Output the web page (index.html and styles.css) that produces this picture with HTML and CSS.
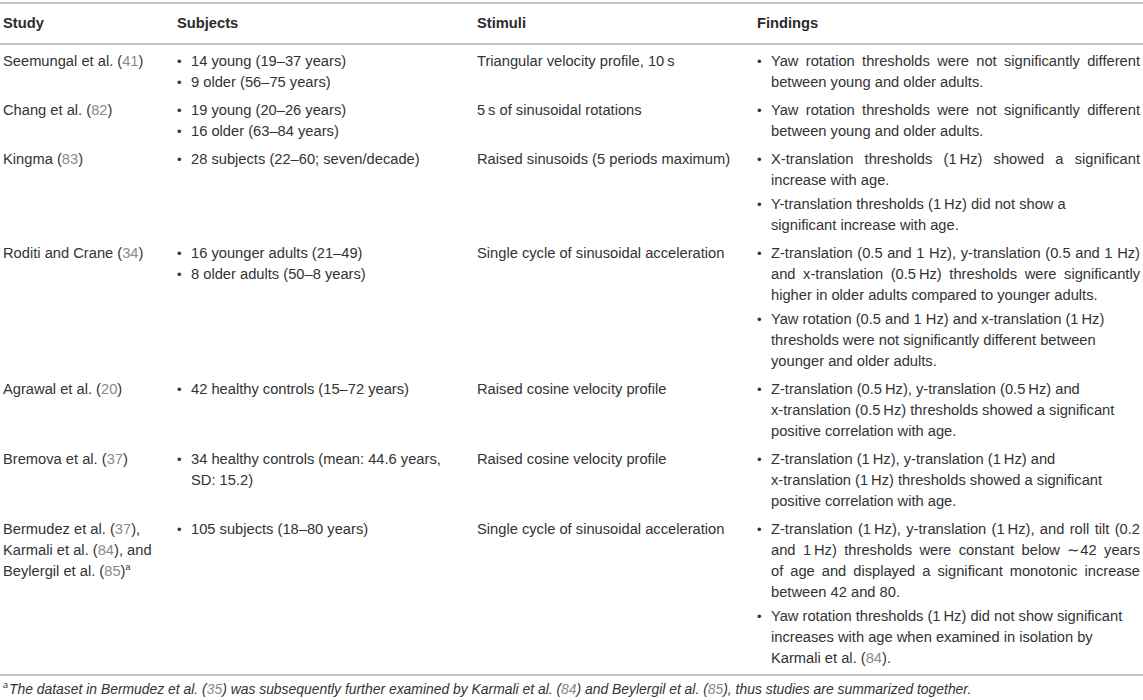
FILE: index.html
```html
<!DOCTYPE html>
<html>
<head>
<meta charset="utf-8">
<link rel="stylesheet" href="styles.css">
</head>
<body>
<div class="wrap">
<table class="studies">
  <colgroup>
    <col class="c-study"><col class="c-subj"><col class="c-stim"><col class="c-find">
  </colgroup>
  <thead>
    <tr><th>Study</th><th>Subjects</th><th>Stimuli</th><th>Findings</th></tr>
  </thead>
  <tbody>
    <tr>
      <td>Seemungal et al. (<span class="ref">41</span>)</td>
      <td><ul class="bl"><li><span>14 young (19–37 years)</span></li><li><span>9 older (56–75 years)</span></li></ul></td>
      <td>Triangular velocity profile, 10&thinsp;s</td>
      <td><ul class="bl just"><li><span>Yaw rotation thresholds were not significantly different between young and older adults.</span></li></ul></td>
    </tr>
    <tr>
      <td>Chang et al. (<span class="ref">82</span>)</td>
      <td><ul class="bl"><li><span>19 young (20–26 years)</span></li><li><span>16 older (63–84 years)</span></li></ul></td>
      <td>5&thinsp;s of sinusoidal rotations</td>
      <td><ul class="bl just"><li><span>Yaw rotation thresholds were not significantly different between young and older adults.</span></li></ul></td>
    </tr>
    <tr>
      <td>Kingma (<span class="ref">83</span>)</td>
      <td><ul class="bl"><li><span>28 subjects (22–60; seven/decade)</span></li></ul></td>
      <td>Raised sinusoids (5 periods maximum)</td>
      <td><ul class="bl just"><li><span>X-translation thresholds (1&thinsp;Hz) showed a significant increase with age.</span></li><li><span>Y-translation thresholds (1&thinsp;Hz) did not show a<br>significant increase with age.</span></li></ul></td>
    </tr>
    <tr>
      <td>Roditi and Crane (<span class="ref">34</span>)</td>
      <td><ul class="bl"><li><span>16 younger adults (21–49)</span></li><li><span>8 older adults (50–8 years)</span></li></ul></td>
      <td>Single cycle of sinusoidal acceleration</td>
      <td><ul class="bl just"><li><span>Z-translation (0.5 and 1 Hz), y-translation (0.5 and 1 Hz) and x-translation (0.5&thinsp;Hz) thresholds were significantly higher in older adults compared to younger adults.</span></li><li><span>Yaw rotation (0.5 and 1 Hz) and x-translation (1&thinsp;Hz)<br>thresholds were not significantly different between<br>younger and older adults.</span></li></ul></td>
    </tr>
    <tr>
      <td>Agrawal et al. (<span class="ref">20</span>)</td>
      <td><ul class="bl"><li><span>42 healthy controls (15–72 years)</span></li></ul></td>
      <td>Raised cosine velocity profile</td>
      <td><ul class="bl just"><li><span>Z-translation (0.5&thinsp;Hz), y-translation (0.5&thinsp;Hz) and<br>x-translation (0.5&thinsp;Hz) thresholds showed a significant<br>positive correlation with age.</span></li></ul></td>
    </tr>
    <tr>
      <td>Bremova et al. (<span class="ref">37</span>)</td>
      <td><ul class="bl"><li><span>34 healthy controls (mean: 44.6 years,<br>SD: 15.2)</span></li></ul></td>
      <td>Raised cosine velocity profile</td>
      <td><ul class="bl just"><li><span>Z-translation (1&thinsp;Hz), y-translation (1&thinsp;Hz) and<br>x-translation (1&thinsp;Hz) thresholds showed a significant<br>positive correlation with age.</span></li></ul></td>
    </tr>
    <tr class="last">
      <td>Bermudez et al. (<span class="ref">37</span>),<br>Karmali et al. (<span class="ref">84</span>), and<br>Beylergil et al. (<span class="ref">85</span>)<sup>a</sup></td>
      <td><ul class="bl"><li><span>105 subjects (18–80 years)</span></li></ul></td>
      <td>Single cycle of sinusoidal acceleration</td>
      <td><ul class="bl just"><li><span><span class="jl">Z-translation (1&thinsp;Hz), y-translation (1&thinsp;Hz), and roll tilt (0.2 and 1&thinsp;Hz) thresholds were constant below ∼42 years</span><span class="jl">of age and displayed a significant monotonic increase</span>between 42 and 80.</span></li><li><span>Yaw rotation thresholds (1&thinsp;Hz) did not show significant<br>increases with age when examined in isolation by<br>Karmali et al. (<span class="ref">84</span>).</span></li></ul></td>
    </tr>
  </tbody>
</table>
<p class="foot"><sup>a</sup>The dataset in Bermudez et al. (<span class="ref">35</span>) was subsequently further examined by Karmali et al. (<span class="ref">84</span>) and Beylergil et al. (<span class="ref">85</span>), thus studies are summarized together.</p>
</div>
</body>
</html>
```

FILE: styles.css
```css
html, body {
  margin: 0;
  padding: 0;
  background: #ffffff;
}
body {
  font-family: "Liberation Sans", Arial, sans-serif;
  font-size: 14.7px;
  color: #333333;
}
.wrap {
  width: 1143px;
  padding-top: 2px;
}
.studies {
  width: 1143px;
  border-collapse: collapse;
  table-layout: fixed;
  border-top: 2px solid #c4c4c4;
}
.c-study { width: 174px; }
.c-subj { width: 300px; }
.c-stim { width: 280px; }
.c-find { width: 389px; }
.studies th {
  text-align: left;
  font-weight: bold;
  line-height: 20px;
  padding: 9px 3px 10px 3px;
  border-bottom: 2px solid #c4c4c4;
  color: #2b2b2b;
}
.studies td {
  vertical-align: top;
  line-height: 21px;
  padding: 6px 3px 1px 3px;
}
.studies tr.last td {
  padding-bottom: 5px;
}
.ref {
  color: #8a8a8a;
}
sup {
  font-size: 9px;
  line-height: 0;
  vertical-align: 6px;
}
.bl {
  list-style: none;
  margin: 0;
  padding: 0;
}
.bl li {
  display: flex;
}
.just li + li {
  margin-top: 3px;
}
.bl li::before {
  content: "•";
  flex: 0 0 14px;
  font-size: 13px;
}
.bl li > span {
  flex: 1 1 auto;
}
.just li > span {
  text-align: justify;
}
.jl {
  display: block;
  text-align: justify;
  text-align-last: justify;
}
.foot {
  margin: 0;
  border-top: 2px solid #c4c4c4;
  padding: 4px 3px 0 3px;
  font-style: italic;
  font-size: 13.9px;
  line-height: 18px;
}
.foot sup {
  margin-right: 1px;
}
```
